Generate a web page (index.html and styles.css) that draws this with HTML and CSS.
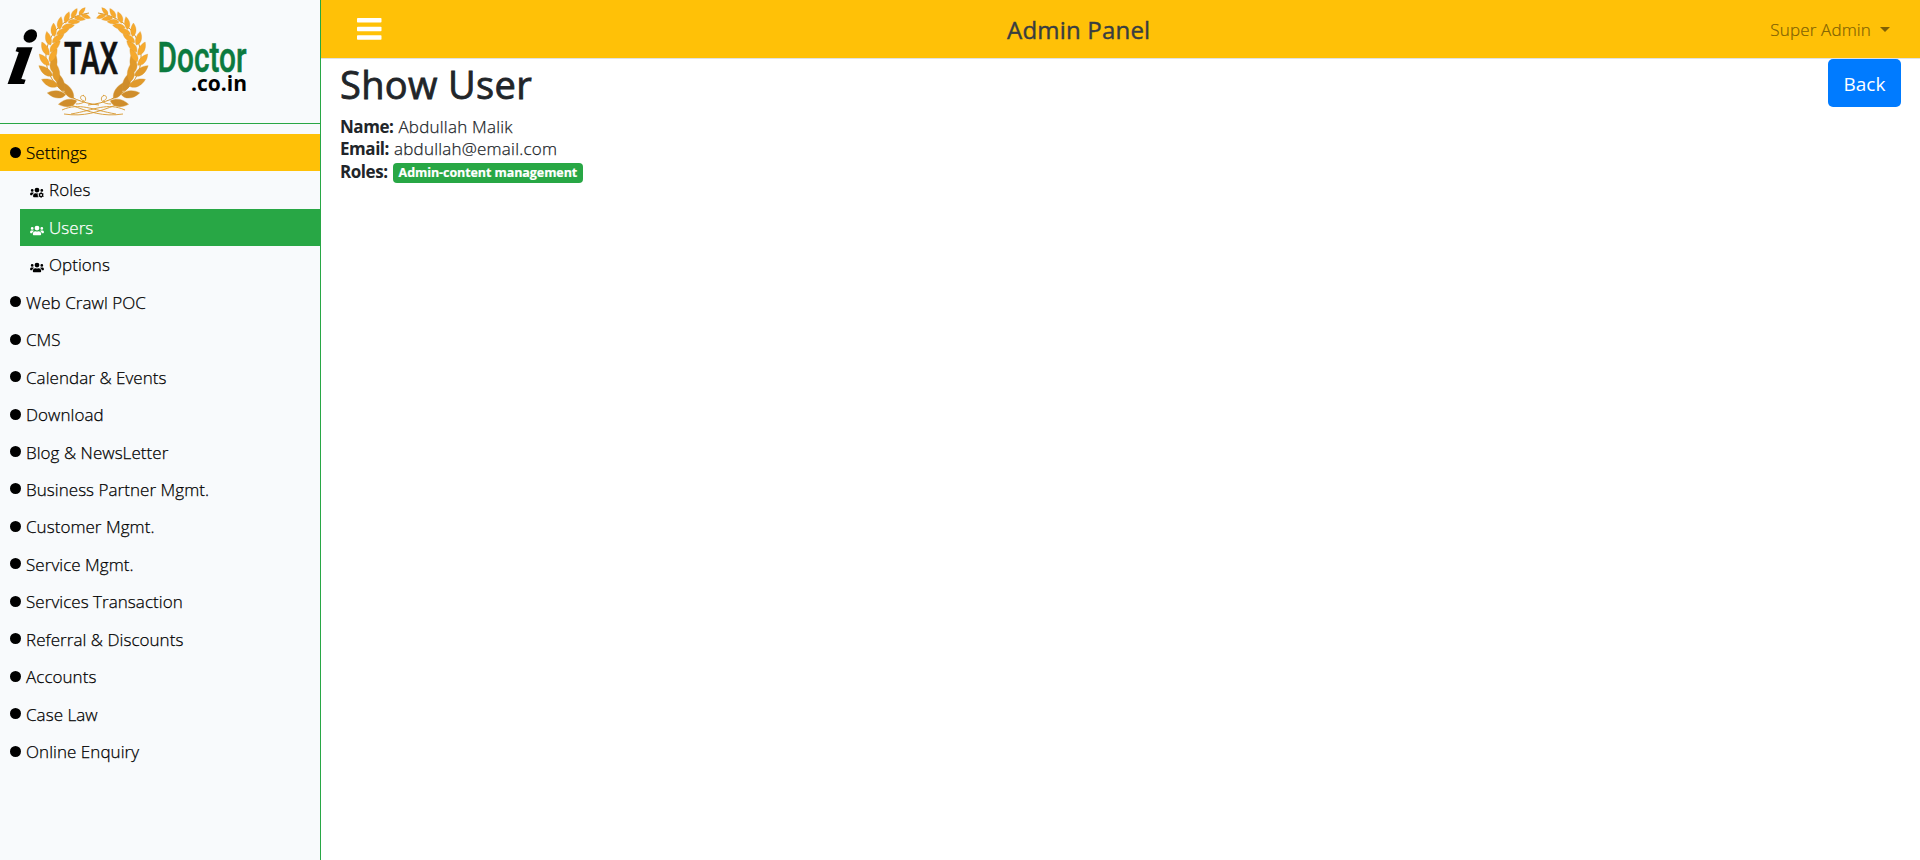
FILE: index.html
```html
<!DOCTYPE html>
<html lang="en">
<head>
<meta charset="utf-8">
<title>Admin Panel</title>
<link rel="stylesheet" href="styles.css">
</head>
<body>
<svg class="defs" width="0" height="0" aria-hidden="true">
  <defs>
    <symbol id="users" viewBox="0 0 640 512"><path fill="currentColor" d="M96 224a64 64 0 1 0 0-128 64 64 0 0 0 0 128zm448 0a64 64 0 1 0 0-128 64 64 0 0 0 0 128zm32 32h-64c-18 0-34 7-45 19 40 22 69 62 75 109h66c18 0 32-14 32-32v-32c0-35-29-64-64-64zm-256 0a112 112 0 1 0 0-224 112 112 0 0 0 0 224zm77 32h-8a155 155 0 0 1-138 0h-8c-64 0-115 51-115 115v29c0 27 21 48 48 48h288c27 0 48-21 48-48v-29c0-64-51-115-115-115zm-224-13c-11-12-27-19-45-19H64c-35 0-64 29-64 64v32c0 18 14 32 32 32h66c6-47 35-87 75-109z"/></symbol>
    <symbol id="users-cog" viewBox="0 0 640 512"><path fill="currentColor" d="M96 224a64 64 0 1 0 0-128 64 64 0 0 0 0 128zm224 32a112 112 0 1 0-112-112c0 62 50 112 112 112zm-147 19c-11-12-27-19-45-19H64c-35 0-64 29-64 64v32c0 18 14 32 32 32h66c6-47 35-87 75-109zM544 224a64 64 0 0 0 0-128 64 64 0 0 0 0 128zM395 480c-30-20-50-60-34-95-20-30-8-70 5-97h-10c-30 16-58 16-95 0h-8c-64 0-115 51-115 115v29c0 27 21 48 48 48z"/><circle cx="510" cy="374" r="76" fill="none" stroke="currentColor" stroke-width="58"/><path stroke="currentColor" stroke-width="52" d="M510 245v45m0 168v44M399 310l38 22m146 84 38 22m-222 0 38-22m146-84 38-22"/></symbol>
    <path id="leaf" d="M0 0C-4.500-3-4-10 1-15 3.800-10 3.800-4 0 0z"/>
    <g id="pair"><use href="#leaf" transform="rotate(-38)"/><use href="#leaf" transform="translate(1 -3) rotate(32)"/></g>
    <g id="branch">
      <path d="M99 105C30 98 30 22 89 13" fill="none" stroke-width="1"/>
      <g fill="#cf8d2b">
        <use href="#pair" transform="translate(93.500 59) rotate(-68) translate(-45 0) scale(1.200 1.250)"/>
        <use href="#pair" transform="translate(93.500 59) rotate(-52) translate(-45 0) scale(1.200 1.250)"/>
      </g>
      <g fill="#e19a2a">
        <use href="#pair" transform="translate(93.500 59) rotate(-37) translate(-44 0) scale(1.150 1.200)"/>
        <use href="#pair" transform="translate(93.500 59) rotate(-22) translate(-44 0) scale(1.080 1.150)"/>
      </g>
      <g fill="#f6a92d">
        <use href="#pair" transform="translate(93.500 59) rotate(-8) translate(-44.500 0)"/>
        <use href="#pair" transform="translate(93.500 59) rotate(5) translate(-44.500 0)"/>
        <use href="#pair" transform="translate(93.500 59) rotate(18) translate(-45 0) scale(.95)"/>
        <use href="#pair" transform="translate(93.500 59) rotate(30) translate(-45 0) scale(.9)"/>
        <use href="#pair" transform="translate(93.500 59) rotate(41) translate(-45 0) scale(.86)"/>
        <use href="#pair" transform="translate(93.500 59) rotate(52) translate(-45.500 0) scale(.8)"/>
        <use href="#pair" transform="translate(93.500 59) rotate(62) translate(-46 0) scale(.75)"/>
        <use href="#pair" transform="translate(93.500 59) rotate(72) translate(-46 0) scale(.65)"/>
      </g>
      <path d="M62 110c18-8 30 0 54 4M64 114c20 3 34-2 52-9M76 104c10 0 12-6 7-9M84 101c-6-2-3-7 0-5" fill="none" stroke-width=".9"/>
    </g>
  </defs>
</svg>
<div class="app">
  <aside class="sidebar">
    <div class="brand">
      <svg class="logo" width="260" height="122" viewBox="0 0 260 122" role="img" aria-label="iTAX Doctor.co.in">
        <g stroke="#d7972f" stroke-width=".3"><use href="#branch"/><use href="#branch" transform="translate(187 0) scale(-1 1)"/></g>
        <text class="logo-i" transform="translate(7 82.500) skewX(-10)">i</text>
        <text class="logo-tax" x="64" y="74" textLength="54" lengthAdjust="spacingAndGlyphs">TAX</text>
        <text class="logo-doctor" x="157.500" y="72" textLength="89" lengthAdjust="spacingAndGlyphs">Doctor</text>
        <text class="logo-domain" x="191" y="91" textLength="56" lengthAdjust="spacingAndGlyphs">.co.in</text>
      </svg>
    </div>
    <nav class="menu">
      <a class="item active"><i class="dot"></i><span>Settings</span></a>
      <a class="sub"><svg class="icon"><use href="#users-cog"/></svg><span>Roles</span></a>
      <a class="sub current"><svg class="icon"><use href="#users"/></svg><span>Users</span></a>
      <a class="sub"><svg class="icon"><use href="#users"/></svg><span>Options</span></a>
      <a class="item"><i class="dot"></i><span>Web Crawl POC</span></a>
      <a class="item"><i class="dot"></i><span>CMS</span></a>
      <a class="item"><i class="dot"></i><span>Calendar &amp; Events</span></a>
      <a class="item"><i class="dot"></i><span>Download</span></a>
      <a class="item"><i class="dot"></i><span>Blog &amp; NewsLetter</span></a>
      <a class="item"><i class="dot"></i><span>Business Partner Mgmt.</span></a>
      <a class="item"><i class="dot"></i><span>Customer Mgmt.</span></a>
      <a class="item"><i class="dot"></i><span>Service Mgmt.</span></a>
      <a class="item"><i class="dot"></i><span>Services Transaction</span></a>
      <a class="item"><i class="dot"></i><span>Referral &amp; Discounts</span></a>
      <a class="item"><i class="dot"></i><span>Accounts</span></a>
      <a class="item"><i class="dot"></i><span>Case Law</span></a>
      <a class="item"><i class="dot"></i><span>Online Enquiry</span></a>
    </nav>
  </aside>
  <main class="main">
    <header class="topbar">
      <svg class="bars" width="25" height="22" viewBox="0 0 25 22" fill="#fff"><rect width="24.500" height="4.600" rx=".8"/><rect y="8.700" width="24.500" height="4.600" rx=".8"/><rect y="17.200" width="24.500" height="4.600" rx=".8"/></svg>
      <div class="title">Admin Panel</div>
      <div class="account"><span>Super Admin</span><i class="caret"></i></div>
    </header>
    <section class="content">
      <div class="details">
        <h1>Show User</h1>
        <div class="field"><b>Name:</b><span>Abdullah Malik</span></div>
        <div class="field"><b>Email:</b><span>abdullah@email.com</span></div>
        <div class="field"><b>Roles:</b><span class="badge">Admin-content management</span></div>
      </div>
      <button class="back">Back</button>
    </section>
  </main>
</div>
</body>
</html>
```
FILE: styles.css
```css
* { box-sizing: border-box; }
body { margin: 0; background: #fff; color: #212529; font-family: "Open Sans", "Noto Sans", sans-serif; font-size: 17px; overflow: hidden; }
.defs { position: absolute; }
.app { display: flex; height: 860px; }
.sidebar { width: 321px; background: #f8fafc; border-right: 1px solid #28a745; flex: none; }
.brand { height: 124px; border-bottom: 1px solid #28a745; }
.logo { display: block; overflow: visible; }
.logo-i { font: italic bold 76px "Liberation Serif", serif; stroke: #000; stroke-width: 2; }
.logo-tax { font: 500 45px Roboto, sans-serif; fill: #111; stroke: #111; stroke-width: .7; }
.logo-doctor { font: 500 42px Roboto, sans-serif; fill: #0b7a3f; stroke: #0b7a3f; stroke-width: .5; }
.logo-domain { font: bold 21px "Open Sans", sans-serif; }
.menu { padding-top: 10px; color: #000; font-weight: 300; letter-spacing: .05px; -webkit-text-stroke: .25px currentColor; }
.item, .sub { display: flex; align-items: center; height: 37px; margin-bottom: .45px; padding-left: 10px; white-space: nowrap; }
.sub { margin-left: 20px; }
.active { background: #ffc107; }
.current { background: #28a745; color: #fff; }
.dot { width: 11px; height: 11px; border-radius: 50%; background: #000; margin: 0 5px 1px 0; }
.icon { width: 14px; height: 11px; margin: 6px 5px 0 0; }
.main { flex: 1; }
.topbar { display: flex; align-items: center; justify-content: space-between; height: 59px; padding: 0 30px 0 36px; background: #ffc107; border-bottom: 1px solid #dee2e6; }
.title { padding-left: 5px; font-size: 24px; font-weight: 500; color: #383d41; -webkit-text-stroke: .4px currentColor; letter-spacing: .2px; }
.account { display: flex; align-items: center; gap: 9px; color: #806104; font-weight: 300; letter-spacing: .15px; -webkit-text-stroke: .2px currentColor; }
.caret { border: 5px solid transparent; border-top-color: #806104; border-bottom: 0; }
.content { display: flex; justify-content: space-between; align-items: flex-start; padding: 0 19px; }
h1 { margin: 1px 0 7px; font-size: 38px; line-height: 48px; font-weight: 500; letter-spacing: .35px; -webkit-text-stroke: .8px currentColor; }
.field { display: flex; align-items: center; height: 22.5px; gap: 5px; font-weight: 300; }
.field > span:not(.badge) { letter-spacing: .22px; -webkit-text-stroke: .25px currentColor; }
.field b { font-weight: 700; letter-spacing: -.45px; }
.badge { height: 20px; margin-top: 4px; padding: 0 6px; border-radius: 4px; background: #28a745; color: #fff; font-size: 12.5px; line-height: 20px; font-weight: 700; letter-spacing: -.07px; -webkit-text-stroke: .2px #fff; }
.back { width: 73px; height: 48px; border: 0; border-radius: 5px; background: #007bff; color: #fff; font: 400 19px "Open Sans", sans-serif; padding: 1px 0 0; }
```
